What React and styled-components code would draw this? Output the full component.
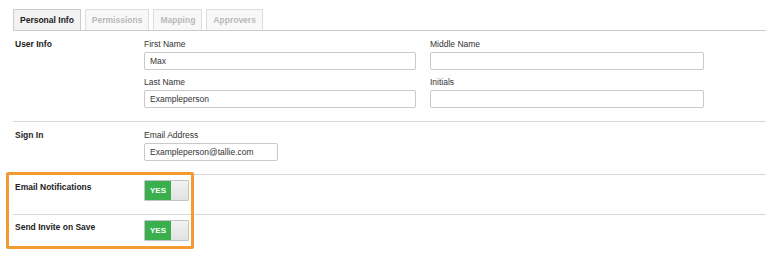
import React from 'react';
import styled, { createGlobalStyle } from 'styled-components';

const GlobalStyle = createGlobalStyle`
    body{
        margin:0;
        background:#fff;
        font-family:"Liberation Sans", Arial, sans-serif;
        color:#333;
    }
`
const PageDiv = styled.div`
    position:relative;
    padding:0 1px 0 13px;
    font-size:8.5px;
`
const TabBar = styled.div`
    display:flex;
    gap:4px;
    padding-top:9px;
    border-bottom:1px solid #ccc;
`
const Tab = styled.div`
    height:20px;
    line-height:20px;
    padding:0 6px;
    font-weight:bold;
    border:1px solid ${props => props.active ? '#ccc' : '#ddd'};
    border-bottom:none;
    background:${props => props.active ? '#f2f2f2' : '#f8f8f8'};
    color:${props => props.active ? '#222' : '#b9b9b9'};
`
const Row = styled.div`
    display:grid;
    grid-template-columns:129px 1fr;
    padding:${props => props.toggle ? '5px 0 13px 2px' : '7px 0 13px 2px'};
    border-bottom:${props => props.last ? 'none' : '1px solid #d8d8d8'};
`
const SectionLabel = styled.div`
    font-weight:bold;
    color:#222;
    line-height:12px;
    margin-top:${props => props.toggle ? '1px' : '0'};
`
const FieldGrid = styled.div`
    display:grid;
    grid-template-columns:${props => props.single ? '134px' : '272px 274px'};
    column-gap:14px;
    row-gap:6px;
`
const Field = styled.div`
    display:flex;
    flex-direction:column;
`
const FieldLabel = styled.div`
    line-height:12px;
    margin-bottom:2px;
    color:#333;
`
const Input = styled.input`
    box-sizing:border-box;
    height:18px;
    width:100%;
    border:1px solid #c9c9c9;
    border-radius:2px;
    padding:0 5px;
    font-family:"Liberation Sans", Arial, sans-serif;
    font-size:8.5px;
    color:#333;
    outline:none;
`
const Toggle = styled.div`
    display:flex;
    width:45px;
    height:21px;
    box-sizing:border-box;
    border:1px solid #c4c4c4;
    border-radius:1px;
    overflow:hidden;
`
const ToggleOn = styled.div`
    width:26px;
    background:#39b04b;
    color:#fff;
    font-weight:bold;
    font-size:8px;
    display:flex;
    align-items:center;
    justify-content:center;
`
const ToggleKnob = styled.div`
    flex:1;
    background:linear-gradient(#f2f2f2, #e2e2e2);
`
const Highlight = styled.div`
    position:absolute;
    left:6px;
    top:172px;
    width:188px;
    height:77px;
    box-sizing:border-box;
    border:3px solid #f29b30;
    border-radius:2px;
    pointer-events:none;
`

const tabs = ['Personal Info', 'Permissions', 'Mapping', 'Approvers']

const TextField = ({ label, value }) => (
    <Field>
        <FieldLabel>{label}</FieldLabel>
        <Input defaultValue={value} />
    </Field>
)

const ToggleRow = ({ label, last }) => (
    <Row toggle last={last}>
        <SectionLabel toggle>{label}</SectionLabel>
        <Toggle>
            <ToggleOn>YES</ToggleOn>
            <ToggleKnob />
        </Toggle>
    </Row>
)

const App = () => {
    return (
        <>
        <GlobalStyle />
        <PageDiv>
            <TabBar>
                {tabs.map((t, i) => <Tab key={t} active={i === 0}>{t}</Tab>)}
            </TabBar>
            <Row>
                <SectionLabel>User Info</SectionLabel>
                <FieldGrid>
                    <TextField label="First Name" value="Max" />
                    <TextField label="Middle Name" value="" />
                    <TextField label="Last Name" value="Exampleperson" />
                    <TextField label="Initials" value="" />
                </FieldGrid>
            </Row>
            <Row>
                <SectionLabel>Sign In</SectionLabel>
                <FieldGrid single>
                    <TextField label="Email Address" value="Exampleperson@tallie.com" />
                </FieldGrid>
            </Row>
            <ToggleRow label="Email Notifications" />
            <ToggleRow label="Send Invite on Save" last />
            <Highlight />
        </PageDiv>
        </>
    );
};

export default App;
